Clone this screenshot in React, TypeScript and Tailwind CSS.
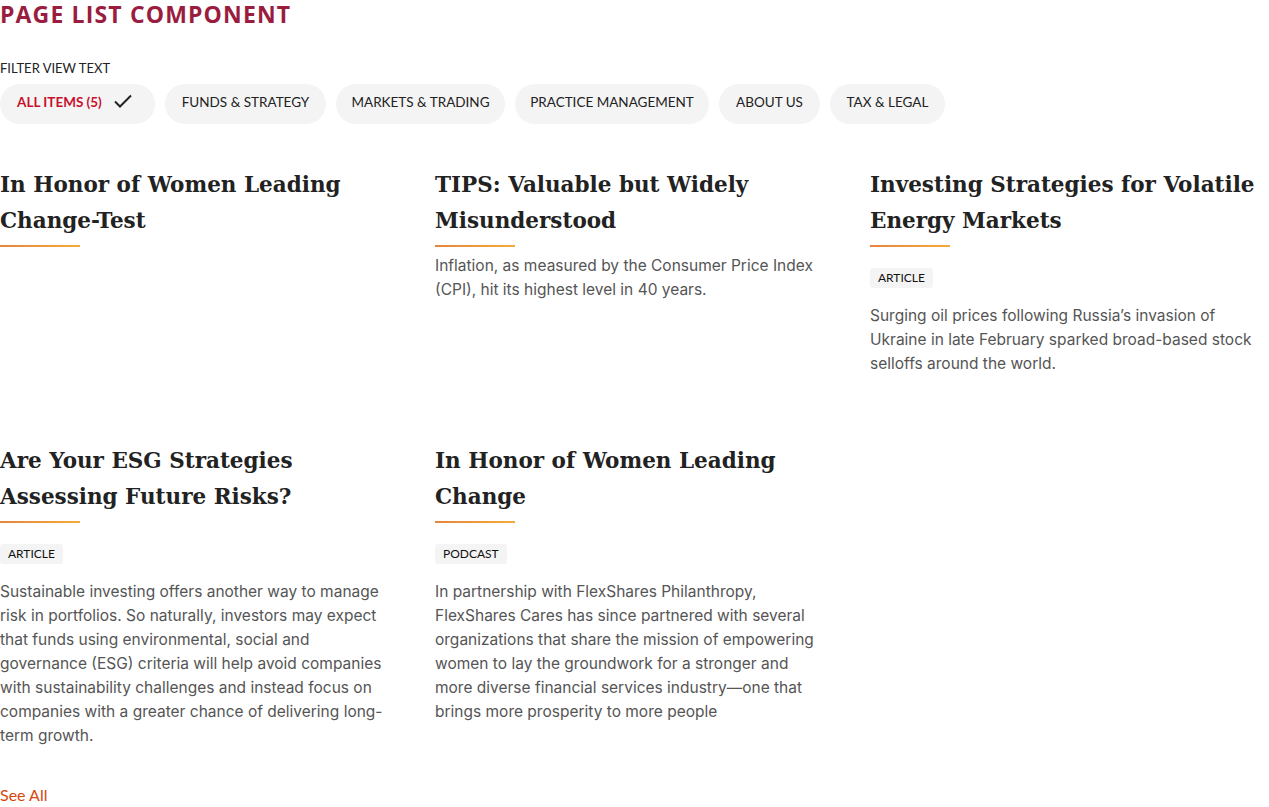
import React from "react";

type Item = { title: string; tag?: string; desc?: string };

const items: Item[] = [
  { title: "In Honor of Women Leading Change-Test" },
  {
    title: "TIPS: Valuable but Widely Misunderstood",
    desc: "Inflation, as measured by the Consumer Price Index (CPI), hit its highest level in 40 years.",
  },
  {
    title: "Investing Strategies for Volatile Energy Markets",
    tag: "ARTICLE",
    desc: "Surging oil prices following Russia\u2019s invasion of Ukraine in late February sparked broad-based stock selloffs around the world.",
  },
  {
    title: "Are Your ESG Strategies Assessing Future Risks?",
    tag: "ARTICLE",
    desc: "Sustainable investing offers another way to manage risk in portfolios. So naturally, investors may expect that funds using environmental, social and governance (ESG) criteria will help avoid companies with sustainability challenges and instead focus on companies with a greater chance of delivering long-term growth.",
  },
  {
    title: "In Honor of Women Leading Change",
    tag: "PODCAST",
    desc: "In partnership with FlexShares Philanthropy, FlexShares Cares has since partnered with several organizations that share the mission of empowering women to lay the groundwork for a stronger and more diverse financial services industry\u2014one that brings more prosperity to more people",
  },
];

const filters = [
  { label: "FUNDS & STRATEGY", w: "w-[161px]" },
  { label: "MARKETS & TRADING", w: "w-[169px]" },
  { label: "PRACTICE MANAGEMENT", w: "w-[194px]" },
  { label: "ABOUT US", w: "w-[101px]" },
  { label: "TAX & LEGAL", w: "w-[115px]" },
];

function Card({ item }: { item: Item }) {
  return (
    <div className="flex flex-col items-start">
      <h3 className="mt-[1px] font-['DejaVu_Serif',serif] text-[21.5px] leading-[36px] font-bold text-[#222] pr-2">
        {item.title}
      </h3>
      <div className="mt-[6px] h-[2px] w-[80px] bg-gradient-to-r from-[#e8843c] to-[#f3ab3c]" />
      {item.tag && (
        <span className="mt-[21px] rounded-[3px] bg-[#f4f4f4] px-[8px] h-[20px] flex items-center text-[12px] text-[#111] font-['Lato',sans-serif]">
          {item.tag}
        </span>
      )}
      {item.desc && (
        <p
          className={`${item.tag ? "mt-[16px]" : "mt-[7px]"} pr-[8px] font-['Inter',sans-serif] text-[15.5px] leading-[24px] text-[#555]`}
        >
          {item.desc}
        </p>
      )}
    </div>
  );
}

export default function App() {
  return (
    <div className="w-[1269px] bg-white font-['Lato',sans-serif]">
      <h1 className="font-['Open_Sans',sans-serif] font-bold text-[23px] leading-[28px] tracking-[0.05em] text-[#9a1d3f]">
        PAGE LIST COMPONENT
      </h1>
      <div className="mt-[32px] text-[13px] leading-[16px] text-[#222]">FILTER VIEW TEXT</div>
      <div className="mt-[8px] flex gap-[10px]">
        <button className="h-[40px] w-[155px] rounded-full bg-[#f4f4f4] pl-[17px] pb-[3px] flex items-center gap-[12px] text-[13.5px] font-bold text-[#c8102e]">
          ALL ITEMS (5)
          <svg width="18" height="14" viewBox="0 0 18 14" fill="none" className="-mt-[4px]">
            <path d="M1 7.5 L6 12.5 L17 1.5" stroke="#222" strokeWidth="2" />
          </svg>
        </button>
        {filters.map((f) => (
          <button
            key={f.label}
            className={`${f.w} h-[40px] rounded-full bg-[#f4f4f4] pb-[3px] flex items-center justify-center whitespace-nowrap text-[13.5px] text-[#222]`}
          >
            {f.label}
          </button>
        ))}
      </div>
      <div className="mt-[42px] grid grid-cols-3 gap-x-[36px] gap-y-[66px]">
        {items.map((it, i) => (
          <Card key={i} item={it} />
        ))}
      </div>
      <a className="mt-[35px] block text-[16px] leading-[24px] text-[#d4470f]">See All</a>
    </div>
  );
}
